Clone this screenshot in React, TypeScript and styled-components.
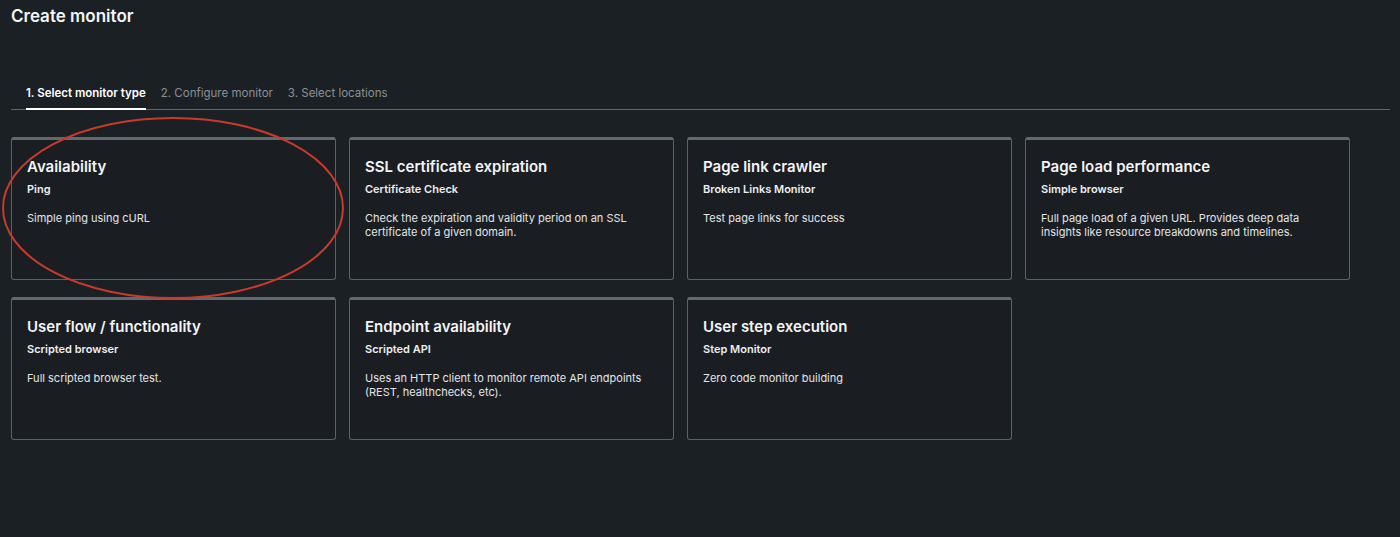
import styled, { createGlobalStyle } from "styled-components"

const Global = createGlobalStyle`
  html, body {
    margin: 0;
    background: #1b2024;
  }
  body {
    font-family: Inter, "Noto Sans", sans-serif;
    color: #f1f2f3;
  }
`

const Page = styled.div`
  position: relative;
  width: 1400px;
  height: 537px;
  box-sizing: border-box;
  padding: 5px 10px 0 11px;
  background: #1b2024;
`

const Title = styled.h1`
  margin: 0;
  font-size: 17px;
  font-weight: 600;
  line-height: 22px;
  color: #f4f5f6;
`

const Tabs = styled.div`
  display: flex;
  gap: 15px;
  margin-top: 55px;
  padding-left: 15px;
  border-bottom: 1px solid #5e666c;
`

const Tab = styled.div<{ $active?: boolean }>`
  font-size: 11.5px;
  line-height: 14px;
  padding: 4px 0 8px;
  font-weight: ${(p) => (p.$active ? 600 : 400)};
  color: ${(p) => (p.$active ? "#ffffff" : "#8b9095")};
  border-bottom: 2px solid ${(p) => (p.$active ? "#ffffff" : "transparent")};
  margin-bottom: -1px;
`

const Grid = styled.div`
  display: grid;
  grid-template-columns: repeat(4, 325px);
  column-gap: 13px;
  row-gap: 17px;
  margin-top: 27px;
`

const Card = styled.div`
  box-sizing: border-box;
  height: 143px;
  padding: 17px 16px 0 15px;
  background: #1a1e22;
  border: 1px solid #5a6268;
  border-top: 3px solid #62696f;
  border-radius: 3px;
`

const CardTitle = styled.div`
  font-size: 15px;
  font-weight: 600;
  line-height: 20px;
  color: #f3f4f5;
`

const CardSub = styled.div`
  margin-top: 5px;
  font-size: 11px;
  font-weight: 600;
  line-height: 14px;
  color: #eceeef;
`

const CardText = styled.div`
  margin-top: 16px;
  font-size: 11px;
  line-height: 13.5px;
  color: #e3e5e7;
  max-width: 290px;
`

const Mark = styled.svg`
  position: absolute;
  left: 0;
  top: 115px;
  pointer-events: none;
`

const monitors = [
  { title: "Availability", sub: "Ping", text: "Simple ping using cURL" },
  {
    title: "SSL certificate expiration",
    sub: "Certificate Check",
    text: "Check the expiration and validity period on an SSL certificate of a given domain.",
  },
  { title: "Page link crawler", sub: "Broken Links Monitor", text: "Test page links for success" },
  {
    title: "Page load performance",
    sub: "Simple browser",
    text: "Full page load of a given URL. Provides deep data insights like resource breakdowns and timelines.",
  },
  { title: "User flow / functionality", sub: "Scripted browser", text: "Full scripted browser test." },
  {
    title: "Endpoint availability",
    sub: "Scripted API",
    text: "Uses an HTTP client to monitor remote API endpoints (REST, healthchecks, etc).",
  },
  { title: "User step execution", sub: "Step Monitor", text: "Zero code monitor building" },
]

export default function App() {
  return (
    <Page>
      <Global />
      <Title>Create monitor</Title>
      <Tabs>
        <Tab $active>1. Select monitor type</Tab>
        <Tab>2. Configure monitor</Tab>
        <Tab>3. Select locations</Tab>
      </Tabs>
      <Grid>
        {monitors.map((m) => (
          <Card key={m.title}>
            <CardTitle>{m.title}</CardTitle>
            <CardSub>{m.sub}</CardSub>
            <CardText>{m.text}</CardText>
          </Card>
        ))}
      </Grid>
      <Mark width="360" height="190" viewBox="0 0 360 190">
        <ellipse cx="173" cy="93" rx="170" ry="90" fill="none" stroke="#c93a2b" strokeWidth="2" />
      </Mark>
    </Page>
  )
}
